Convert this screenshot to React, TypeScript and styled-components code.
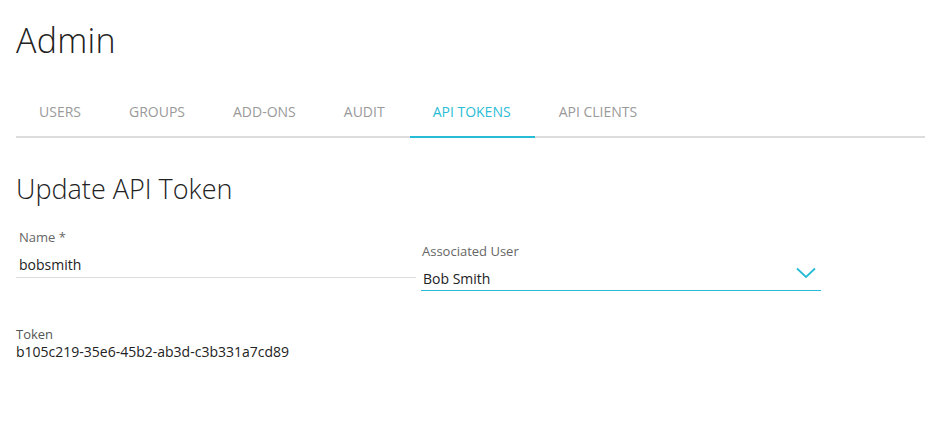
import React from "react";
import styled, { createGlobalStyle } from "styled-components";

const Global = createGlobalStyle`
  html, body { margin: 0; padding: 0; background: #fff; }
  body { font-family: "Open Sans", "Noto Sans", sans-serif; color: #222; }
  * { box-sizing: border-box; }
`;

const Page = styled.div`
  padding: 20px 0 0 16px;
  width: 925px;
`;

const Title = styled.h1`
  margin: 0;
  font-size: 34px;
  line-height: 40px;
  font-weight: 300;
  letter-spacing: 0.3px;
  color: #222;
`;

const TabBar = styled.nav`
  display: flex;
  margin-top: 28px;
  border-bottom: 2px solid #dddddd;
`;

const Tab = styled.div<{ $active?: boolean }>`
  padding: 14px 24px 14px 23px;
  margin-right: 1px;
  margin-bottom: -2px;
  font-size: 14px;
  line-height: 20px;
  text-transform: uppercase;
  color: ${(p) => (p.$active ? "#2bbdd6" : "#9a9a9a")};
  border-bottom: 2px solid ${(p) => (p.$active ? "#26bcd6" : "transparent")};
`;

const SubTitle = styled.h2`
  margin: 35px 0 0;
  font-size: 27px;
  line-height: 32px;
  font-weight: 300;
  color: #222;
`;

const FormRow = styled.div`
  display: flex;
  gap: 5px;
  margin-top: 23px;
`;

const Field = styled.div<{ $offset?: number }>`
  width: 400px;
  margin-top: ${(p) => p.$offset ?? 0}px;
  display: flex;
  flex-direction: column;
`;

const Label = styled.label<{ $inset?: number }>`
  font-size: 13px;
  line-height: 18px;
  color: #666;
  padding-left: ${(p) => p.$inset ?? 3}px;
  margin-bottom: 9px;
`;

const InputBox = styled.div<{ $focused?: boolean }>`
  position: relative;
  font-size: 14px;
  line-height: 20px;
  color: #222;
  padding: 0 0 ${(p) => (p.$focused ? 1 : 2)}px ${(p) => (p.$focused ? 2 : 3)}px;
  border-bottom: 1px solid ${(p) => (p.$focused ? "#26bcd6" : "#dddddd")};
`;

const Chevron = styled.svg`
  position: absolute;
  right: 5px;
  top: -2px;
`;

const TokenBlock = styled.div`
  margin-top: 34px;
  line-height: 18px;
`;

const TokenLabel = styled.div`
  font-size: 13px;
  color: #555;
`;

const TokenValue = styled.div`
  color: #222;
  font-size: 14px;
`;

const tabs = ["Users", "Groups", "Add-ons", "Audit", "API Tokens", "API Clients"];

export default function App() {
  return (
    <>
      <Global />
      <Page>
        <Title>Admin</Title>
        <TabBar>
          {tabs.map((t) => (
            <Tab key={t} $active={t === "API Tokens"}>
              {t}
            </Tab>
          ))}
        </TabBar>
        <SubTitle>Update API Token</SubTitle>
        <FormRow>
          <Field>
            <Label>Name *</Label>
            <InputBox>bobsmith</InputBox>
          </Field>
          <Field $offset={14}>
            <Label $inset={1}>Associated User</Label>
            <InputBox $focused>
              Bob Smith
              <Chevron width="20" height="12" viewBox="0 0 20 12">
                <path d="M1 1.5 L10 10 L19 1.5" fill="none" stroke="#26bcd6" strokeWidth="1.8" />
              </Chevron>
            </InputBox>
          </Field>
        </FormRow>
        <TokenBlock>
          <TokenLabel>Token</TokenLabel>
          <TokenValue>b105c219-35e6-45b2-ab3d-c3b331a7cd89</TokenValue>
        </TokenBlock>
      </Page>
    </>
  );
}
